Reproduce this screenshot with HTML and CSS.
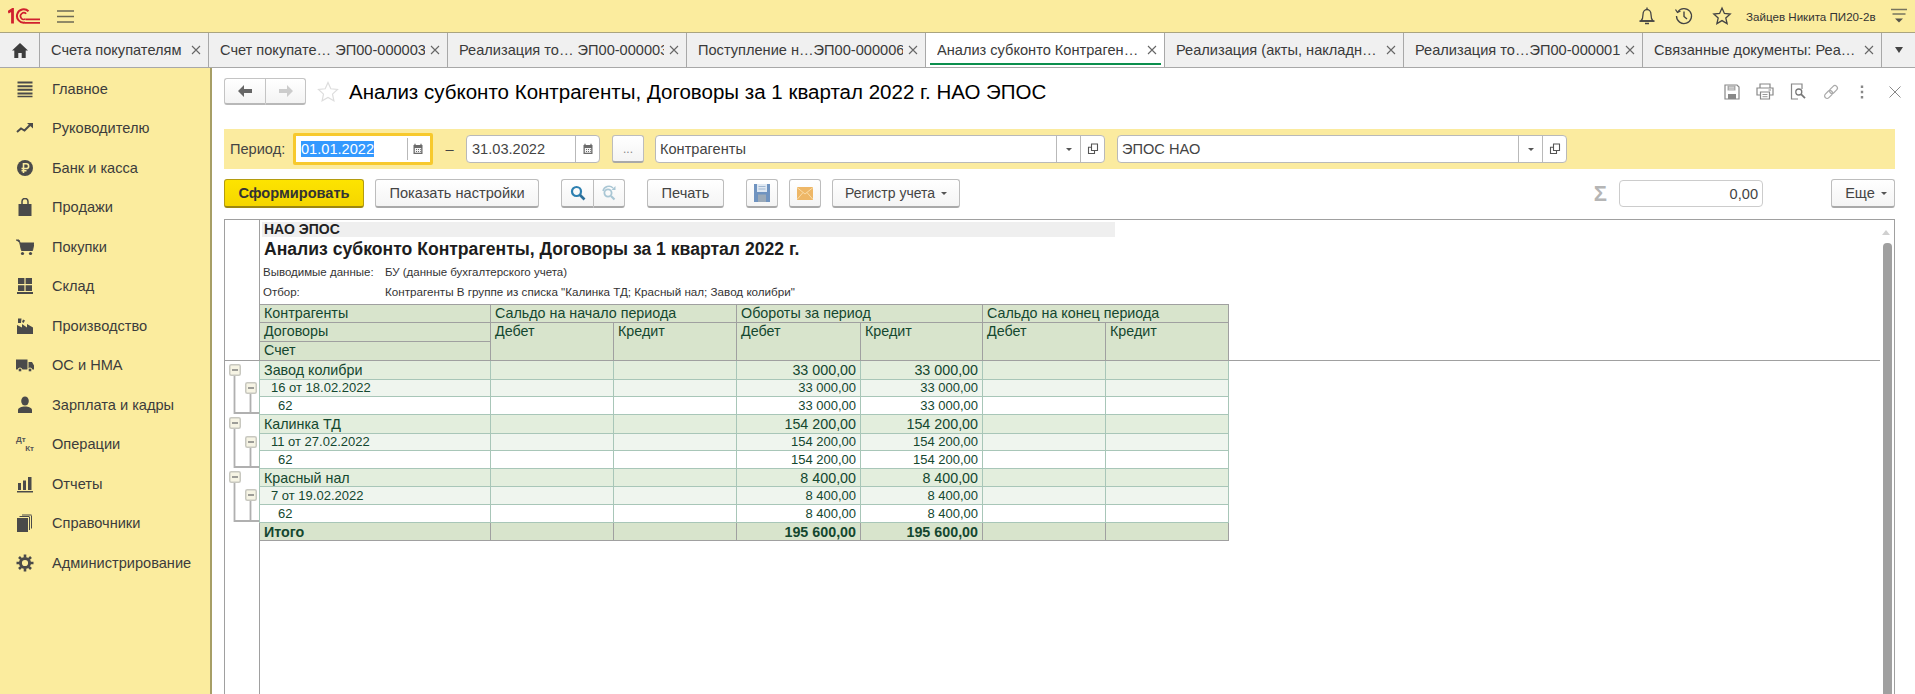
FILE: index.html
```html
<!DOCTYPE html>
<html lang="ru">
<head>
<meta charset="utf-8">
<title>Анализ субконто</title>
<link rel="stylesheet" href="styles.css">
</head>
<body>
<svg class="defs" width="0" height="0">
  <defs>
    <symbol id="i-x" viewBox="0 0 10 10"><path d="M1 1l8 8M9 1l-8 8" fill="none" stroke="currentColor" stroke-width="1.1"/></symbol>
    <symbol id="i-cal" viewBox="0 0 12 12"><path d="M1.5 2h9v9h-9z" fill="#6b6b6b"/><path d="M3 .8v2M9 .8v2" stroke="#6b6b6b" stroke-width="1.2"/><path d="M2.8 5h6.4v4.8H2.8z" fill="#f3f3f3"/><path d="M4 6h1v1H4zM6 6h1v1H6zM8 6h.8v1H8zM4 8h1v1H4zM6 8h1v1H6zM8 8h.8v1H8z" fill="#6b6b6b"/></symbol>
    <symbol id="i-open" viewBox="0 0 12 12"><path d="M4.5 1h6v6.5h-6z" fill="none" stroke="#555" stroke-width="1.1"/><path d="M4.5 4.2H1.5v6.3h6V8" fill="none" stroke="#555" stroke-width="1.1"/></symbol>
    <symbol id="i-minus" viewBox="0 0 12 12"><rect x=".75" y=".75" width="10.5" height="10.5" rx="1.5" fill="#f6f4e4" stroke="#c8c8c0" stroke-width="1.5"/><path d="M3 6h6" stroke="#777" stroke-width="1.4"/></symbol>
  </defs>
</svg>

<header class="topbar">
  <svg class="logo" viewBox="0 0 32 16" width="32" height="16"><path d="M0 4.300L4.500 1.500V15.500" fill="none" stroke="#d0202e" stroke-width="2.800"/><path d="M20.500 3.300A6.700 6.700 0 1 0 17 14.500" fill="none" stroke="#d0202e" stroke-width="2"/><path d="M18.200 5.800A3.300 3.300 0 1 0 17.500 10.900" fill="none" stroke="#d0202e" stroke-width="1.600"/><path d="M17 14.900H32M17.500 11.300H32" stroke="#d0202e" stroke-width="1.700"/></svg>
  <svg class="burger" viewBox="0 0 17 13" width="17" height="13"><path d="M0 1h17M0 6.500h17M0 12h17" stroke="#6e6a55" stroke-width="1.400"/></svg>
  <div class="top-right">
    <svg class="tico" viewBox="0 0 18 20" width="18" height="20"><path d="M3 15c1.500-1.500 2-3 2-6.500C5 5.500 6.800 3.500 9 3.500s4 2 4 5c0 3.500.5 5 2 6.500z" fill="none" stroke="#444" stroke-width="1.300"/><path d="M9 1.500v2M1.500 15h15M7 17.500h4" stroke="#444" stroke-width="1.300"/></svg>
    <svg class="tico" viewBox="0 0 20 20" width="20" height="20"><path d="M3.700 6A7.500 7.500 0 1 1 2.500 10" fill="none" stroke="#444" stroke-width="1.300"/><path d="M1.500 3.500l2 3 3-1.500" fill="none" stroke="#444" stroke-width="1.300"/><path d="M10 5.500V10.500l3 2.500" fill="none" stroke="#444" stroke-width="1.400"/></svg>
    <svg class="tico" viewBox="0 0 20 20" width="20" height="20"><path d="M10 2l2.400 5.400 5.800.6-4.400 3.900 1.300 5.700-5.100-3-5.100 3 1.300-5.700L1.800 8l5.800-.6z" fill="none" stroke="#444" stroke-width="1.300"/></svg>
    <span class="user">Зайцев Никита ПИ20-2в</span>
    <svg class="tico" viewBox="0 0 16 16" width="16" height="16"><path d="M0 1.500h16M1.500 6h13" stroke="#77745f" stroke-width="1.400"/><path d="M4 10.500h8l-4 4z" fill="#55534a"/></svg>
  </div>
</header>

<nav class="tabs">
  <div class="tab home"><svg viewBox="0 0 16 15" width="16" height="15"><path d="M8 0L0 7.500h2.300V15h4v-5h3.400v5h4V7.500H16z" fill="#3d3d3d"/></svg></div>
  <div class="tab"><span class="tab-text">Счета покупателям</span><svg class="tab-x"><use href="#i-x"/></svg></div>
  <div class="tab"><span class="tab-text">Счет покупате… ЭП00-000003</span><svg class="tab-x"><use href="#i-x"/></svg></div>
  <div class="tab"><span class="tab-text">Реализация то… ЭП00-000003</span><svg class="tab-x"><use href="#i-x"/></svg></div>
  <div class="tab"><span class="tab-text">Поступление н…ЭП00-000006</span><svg class="tab-x"><use href="#i-x"/></svg></div>
  <div class="tab active"><span class="tab-text">Анализ субконто Контраген…</span><svg class="tab-x"><use href="#i-x"/></svg></div>
  <div class="tab"><span class="tab-text">Реализация (акты, накладн…</span><svg class="tab-x"><use href="#i-x"/></svg></div>
  <div class="tab"><span class="tab-text">Реализация то…ЭП00-000001</span><svg class="tab-x"><use href="#i-x"/></svg></div>
  <div class="tab"><span class="tab-text">Связанные документы: Реа…</span><svg class="tab-x"><use href="#i-x"/></svg></div>
  <div class="tab more"><span class="caret big"></span></div>
</nav>

<div class="layout">
  <aside class="sidebar">
    <div class="side-item"><svg viewBox="0 0 18 18" width="18" height="18"><path d="M1.500 2.500h15M1.500 6.200h15M1.500 9.800h15M1.500 13.500h15" stroke="#4a4a4a" stroke-width="2"/><path d="M1.500 16.500h15" stroke="#4a4a4a" stroke-width="1.500"/></svg><span>Главное</span></div>
    <div class="side-item"><svg viewBox="0 0 18 18" width="18" height="18"><path d="M1 13l4-3.500 3.500 2L14 6" fill="none" stroke="#4a4a4a" stroke-width="2"/><path d="M11 4h6v5.500z" fill="#4a4a4a"/></svg><span>Руководителю</span></div>
    <div class="side-item"><svg viewBox="0 0 18 18" width="18" height="18"><circle cx="9" cy="9" r="8" fill="#4a4a4a"/><path d="M7.500 14V4.800h2.800a2.300 2.300 0 0 1 0 4.700H5.500M5.500 11.800h5" fill="none" stroke="#fbec9e" stroke-width="1.600"/></svg><span>Банк и касса</span></div>
    <div class="side-item"><svg viewBox="0 0 18 18" width="18" height="18"><path d="M2.500 6h13v12h-13z" fill="#4a4a4a"/><path d="M6 8V3.500a3 3 0 0 1 6 0V8" fill="none" stroke="#4a4a4a" stroke-width="1.500"/></svg><span>Продажи</span></div>
    <div class="side-item"><svg viewBox="0 0 18 18" width="18" height="18"><path d="M0 2h3l1.200 3H18l-1.500 7.500H5.500L3.800 5" fill="#4a4a4a" stroke="#4a4a4a"/><circle cx="6.500" cy="15.500" r="1.600" fill="#4a4a4a"/><circle cx="14.500" cy="15.500" r="1.600" fill="#4a4a4a"/></svg><span>Покупки</span></div>
    <div class="side-item"><svg viewBox="0 0 18 18" width="18" height="18"><path d="M2 1h6.400v6H2zM9.600 1H16v6H9.600zM2 8.200h6.400v5.800H2zM9.600 8.200H16v5.800H9.600zM1 15h16v2H1z" fill="#4a4a4a"/></svg><span>Склад</span></div>
    <div class="side-item"><svg viewBox="0 0 18 18" width="18" height="18"><path d="M1 17V8l5 2.500V7l5 3.500V7l6 3.500V17z" fill="#4a4a4a"/><path d="M2 1.500h3.500L5 6H2zM7 2.500l2 1-1.500 2.500-1.500-1z" fill="#4a4a4a"/></svg><span>Производство</span></div>
    <div class="side-item"><svg viewBox="0 0 18 18" width="18" height="18"><path d="M0 3.500h11.500v10H0zM12.500 6H16l2 3.500v4h-5.500z" fill="#4a4a4a"/><circle cx="4" cy="14" r="2" fill="#4a4a4a" stroke="#fbec9e"/><circle cx="14" cy="14" r="2" fill="#4a4a4a" stroke="#fbec9e"/></svg><span>ОС и НМА</span></div>
    <div class="side-item"><svg viewBox="0 0 18 18" width="18" height="18"><ellipse cx="9" cy="5" rx="3.800" ry="4.500" fill="#4a4a4a"/><path d="M2 17v-3c0-2 3.500-3.500 7-3.500s7 1.500 7 3.500v3z" fill="#4a4a4a"/></svg><span>Зарплата и кадры</span></div>
    <div class="side-item"><span class="dtkt"><b>Дт</b><b class="kt">Кт</b></span><span>Операции</span></div>
    <div class="side-item"><svg viewBox="0 0 18 18" width="18" height="18"><path d="M2 8h3v7H2zM7 5.500h3V15H7zM12 2h3.500v13H12z" fill="#4a4a4a"/><path d="M1 16h16v1.500H1z" fill="#4a4a4a"/></svg><span>Отчеты</span></div>
    <div class="side-item"><svg viewBox="0 0 18 18" width="18" height="18"><path d="M1 4h11v14H1z" fill="#4a4a4a"/><path d="M13.500 3v13M15.500 1.500v13M3.500 2.500h10M6 1h9.500" fill="none" stroke="#4a4a4a" stroke-width="1"/></svg><span>Справочники</span></div>
    <div class="side-item"><svg viewBox="0 0 18 18" width="18" height="18"><circle cx="9" cy="9" r="4.600" fill="none" stroke="#4a4a4a" stroke-width="3"/><path d="M9 .5v3M9 14.500v3M.5 9h3M14.500 9h3M3 3l2.200 2.200M12.800 12.800L15 15M15 3l-2.200 2.200M5.200 12.800L3 15" stroke="#4a4a4a" stroke-width="2.600"/></svg><span>Администрирование</span></div>
  </aside>

  <main class="main">
    <div class="title-row">
      <div class="nav-pair">
        <button class="nav-btn"><svg viewBox="0 0 14 12" width="14" height="12"><path d="M6 0v4h8v4H6v4L0 6z" fill="#666"/></svg></button>
        <button class="nav-btn"><svg viewBox="0 0 14 12" width="14" height="12"><path d="M8 0v4H0v4h8v4l6-6z" fill="#ccc"/></svg></button>
      </div>
      <svg class="fav" viewBox="0 0 22 22" width="22" height="22"><path d="M11 1.500l2.800 6.300 6.700.7-5 4.600 1.400 6.700-5.900-3.400-5.900 3.400 1.400-6.700-5-4.600 6.700-.7z" fill="none" stroke="#ddd" stroke-width="1.200"/></svg>
      <h1 class="title">Анализ субконто Контрагенты, Договоры за 1 квартал 2022 г. НАО ЭПОС</h1>
      <div class="form-icons">
        <svg class="fi" viewBox="0 0 16 16" width="16" height="16"><path d="M1 1h12l2 2v12H1z" fill="none" stroke="#888" stroke-width="1.200"/><path d="M3.500 1.500h8v5h-8z" fill="#aaa"/><path d="M4 10h8v5H4z" fill="#888"/><path d="M5 3.200h5M5 5h5" stroke="#eee" stroke-width=".8"/></svg>
        <svg class="fi" viewBox="0 0 18 17" width="18" height="17"><path d="M4 5V1h10v4M4 12H1V5h16v7h-3" fill="none" stroke="#888" stroke-width="1.200"/><path d="M4.500 9h9v7h-9z" fill="#fff" stroke="#888" stroke-width="1.200"/><path d="M6.500 11.500h5M6.500 13.700h5" stroke="#999"/><path d="M12.500 7h2.500" stroke="#999" stroke-width="1.200"/></svg>
        <svg class="fi" viewBox="0 0 17 17" width="17" height="17"><path d="M8 16H1.500V1H12v5" fill="none" stroke="#888" stroke-width="1.200"/><circle cx="8.800" cy="9" r="3" fill="none" stroke="#777" stroke-width="1.300"/><path d="M11 11.200l4 4" stroke="#777" stroke-width="1.800"/></svg>
        <svg class="fi" viewBox="0 0 18 18" width="18" height="18"><g transform="rotate(-45 9 9)" fill="none" stroke="#aaa" stroke-width="1.200"><rect x="1" y="6.500" width="9" height="5" rx="2.500"/><rect x="8" y="6.500" width="9" height="5" rx="2.500"/></g></svg>
        <svg class="fi" viewBox="0 0 4 14" width="4" height="14"><path d="M.8.500h2.400v2.400H.8zM.8 5.800h2.400v2.400H.8zM.8 11h2.400v2.400H.8z" fill="#888"/></svg>
        <svg class="fi" viewBox="0 0 12 12" width="12" height="12"><path d="M.5.500l11 11M11.500.500l-11 11" stroke="#888" stroke-width="1"/></svg>
      </div>
    </div>

    <div class="period">
      <label class="period-label">Период:</label>
      <div class="focus-ring">
        <div class="field date focused"><span class="val"><span class="sel">01.01.2022</span></span><span class="cell-btn"><svg width="12" height="12"><use href="#i-cal"/></svg></span></div>
      </div>
      <span class="dash">–</span>
      <div class="field date"><span class="val">31.03.2022</span><span class="cell-btn"><svg width="12" height="12"><use href="#i-cal"/></svg></span></div>
      <button class="btn dots">...</button>
      <div class="field pick"><span class="val">Контрагенты</span><span class="cell-btn"><span class="caret small"></span></span><span class="cell-btn"><svg width="12" height="12"><use href="#i-open"/></svg></span></div>
      <div class="field pick"><span class="val">ЭПОС НАО</span><span class="cell-btn"><span class="caret small"></span></span><span class="cell-btn"><svg width="12" height="12"><use href="#i-open"/></svg></span></div>
    </div>

    <div class="toolbar">
      <button class="btn primary">Сформировать</button>
      <button class="btn wide-settings">Показать настройки</button>
      <div class="icon-pair sep">
        <button class="btn ico"><svg viewBox="0 0 16 16" width="16" height="16"><circle cx="6.500" cy="6.500" r="4.500" fill="none" stroke="#2c7fb0" stroke-width="2.200"/><path d="M10 10l4.500 4.500" stroke="#2c6f9a" stroke-width="2.600"/></svg></button>
        <button class="btn ico"><svg viewBox="0 0 16 16" width="16" height="16"><circle cx="7" cy="8" r="3.600" fill="none" stroke="#a9c6d4" stroke-width="1.800"/><path d="M10 11l3.500 3.500" stroke="#a9c6d4" stroke-width="2.200"/><path d="M2 6a6 6 0 0 1 10-3" fill="none" stroke="#a9c6d4" stroke-width="1.500"/><path d="M14.500 1v4h-4z" fill="#a9c6d4"/></svg></button>
      </div>
      <button class="btn print sep">Печать</button>
      <button class="btn ico square sep"><svg viewBox="0 0 18 20" width="18" height="20"><path d="M1 1h16v18H1z" fill="#6f93c0"/><path d="M4 1h10v8H4z" fill="#dfe8f2"/><path d="M5 11.500h8V19H5z" fill="#9aa9b8"/><path d="M5.500 3.500h7M5.500 6h7" stroke="#9fb6d0"/></svg></button>
      <button class="btn ico square"><svg viewBox="0 0 16 13" width="16" height="13"><path d="M0 0h16v13H0z" fill="#eeb767"/><path d="M0 .5l8 6.500 8-6.500M0 12.500l6-7M16 12.500l-6-7" fill="none" stroke="#f9dca8" stroke-width="1"/></svg></button>
      <button class="btn register">Регистр учета<span class="caret small inline"></span></button>
      <div class="sum-group">
        <span class="sigma">Σ</span>
        <div class="sum-field">0,00</div>
      </div>
      <button class="btn more-btn">Еще<span class="caret small inline"></span></button>
    </div>

    <section class="sheet">
      <div class="freeze-line"></div>
      <div class="gutter">
        <svg class="tree" viewBox="0 0 34 165" width="34" height="165">
          <g fill="none" stroke="#b0b0b0" stroke-width="1.800">
            <path d="M9.500 15v38h25M25.500 32v21h9"/>
            <path d="M9.500 68v39h25M25.500 86v21h9"/>
            <path d="M9.500 122v39h25M25.500 140v21h9"/>
          </g>
          <use href="#i-minus" x="4" y="4" width="12" height="12"/>
          <use href="#i-minus" x="20" y="22" width="12" height="12"/>
          <use href="#i-minus" x="4" y="57" width="12" height="12"/>
          <use href="#i-minus" x="20" y="76" width="12" height="12"/>
          <use href="#i-minus" x="4" y="111" width="12" height="12"/>
          <use href="#i-minus" x="20" y="129" width="12" height="12"/>
        </svg>
      </div>
      <div class="report">
        <div class="company">НАО ЭПОС</div>
        <div class="report-title">Анализ субконто Контрагенты, Договоры за 1 квартал 2022 г.</div>
        <div class="meta"><span class="meta-k">Выводимые данные:</span><span>БУ (данные бухгалтерского учета)</span></div>
        <div class="meta"><span class="meta-k">Отбор:</span><span class="meta-wide">Контрагенты В группе из списка "Калинка ТД; Красный нал; Завод колибри"</span></div>
        <table class="grid">
          <colgroup><col class="c0"><col class="c1"><col class="c1"><col class="c2"><col class="c3"><col class="c1"><col class="c1"></colgroup>
          <thead>
            <tr class="h18"><th>Контрагенты</th><th colspan="2">Сальдо на начало периода</th><th colspan="2">Обороты за период</th><th colspan="2">Сальдо на конец периода</th></tr>
            <tr class="h19"><th>Договоры</th><th rowspan="2">Дебет</th><th rowspan="2">Кредит</th><th rowspan="2">Дебет</th><th rowspan="2">Кредит</th><th rowspan="2">Дебет</th><th rowspan="2">Кредит</th></tr>
            <tr class="h19"><th>Счет</th></tr>
          </thead>
          <tbody>
            <tr class="l1 h19"><td>Завод колибри</td><td></td><td></td><td>33 000,00</td><td>33 000,00</td><td></td><td></td></tr>
            <tr class="l2 h17"><td>16 от 18.02.2022</td><td></td><td></td><td>33 000,00</td><td>33 000,00</td><td></td><td></td></tr>
            <tr class="l3 h18"><td>62</td><td></td><td></td><td>33 000,00</td><td>33 000,00</td><td></td><td></td></tr>
            <tr class="l1 h19"><td>Калинка ТД</td><td></td><td></td><td>154 200,00</td><td>154 200,00</td><td></td><td></td></tr>
            <tr class="l2 h17"><td>11 от 27.02.2022</td><td></td><td></td><td>154 200,00</td><td>154 200,00</td><td></td><td></td></tr>
            <tr class="l3 h18"><td>62</td><td></td><td></td><td>154 200,00</td><td>154 200,00</td><td></td><td></td></tr>
            <tr class="l1 h18"><td>Красный нал</td><td></td><td></td><td>8 400,00</td><td>8 400,00</td><td></td><td></td></tr>
            <tr class="l2 h18"><td>7 от 19.02.2022</td><td></td><td></td><td>8 400,00</td><td>8 400,00</td><td></td><td></td></tr>
            <tr class="l3 h18"><td>62</td><td></td><td></td><td>8 400,00</td><td>8 400,00</td><td></td><td></td></tr>
            <tr class="total h18"><td>Итого</td><td></td><td></td><td>195 600,00</td><td>195 600,00</td><td></td><td></td></tr>
          </tbody>
        </table>
      </div>
      <div class="scroll-up"></div>
      <div class="scroll-thumb"></div>
    </section>
  </main>
</div>
</body>
</html>
```
FILE: styles.css
```css
* { box-sizing: border-box; }
html, body { margin: 0; height: 694px; overflow: hidden; }
body { font-family: "Liberation Sans", Arial, sans-serif; font-size: 14.6px; color: #333; background: #fff; display: flex; flex-direction: column; }
.defs { position: absolute; }
button { font: inherit; color: inherit; padding: 0; }

.topbar { height: 33px; flex: none; background: #fbec9e; border-bottom: 1px solid #aaa47f; display: flex; align-items: center; padding-left: 8px; }
.logo { display: block; }
.burger { margin-left: 17px; }
.top-right { margin-left: auto; display: flex; align-items: center; }
.tico { display: block; margin-right: 18px; }
.top-right .tico:nth-child(3) { margin-right: 14px; }
.top-right .tico:last-child { margin: 0 8px 0 14px; }
.user { font-size: 11.600px; color: #333; width: 131px; white-space: nowrap; }

.tabs { height: 35px; flex: none; display: grid; grid-template-columns: 40px 169px repeat(7, 239px) 1fr; background: #f0f0f0; border-bottom: 1px solid #a8a8a8; }
.tab { position: relative; display: flex; align-items: center; padding: 0 7px 0 11px; border-right: 1px solid #a8a8a8; min-width: 0; }
.tab-text { white-space: pre; overflow: hidden; flex: 1; min-width: 0; line-height: 20px; color: #3a3a3a; }
.tab-x { width: 10px; height: 10px; flex: none; margin-left: 5px; color: #666; }
.tab.home { justify-content: center; padding: 0; }
.tab.more { justify-content: center; padding: 0; border-right: 0; }
.tab.active { background: #fff; }
.tab.active::after { content: ""; position: absolute; left: 4px; right: 3px; bottom: 2px; height: 2px; background: #0b8f4d; }

.caret { display: inline-block; width: 0; height: 0; border-style: solid; border-color: #555 transparent transparent; }
.caret.big { border-width: 6px 4.500px 0; border-top-color: #444; }
.caret.small { border-width: 3px 3px 0; }
.caret.inline { margin-left: 6px; vertical-align: 1px; }

.layout { flex: 1; min-height: 0; display: flex; }
.sidebar { width: 212px; flex: none; background: #fbec9e; border-right: 2px solid #a79f66; padding-top: 1px; }
.side-item { height: 39.500px; display: flex; align-items: center; padding-left: 16px; }
.side-item svg { display: block; flex: none; }
.side-item > span:last-child { margin-left: 18px; color: #3c3c3c; }
.dtkt { width: 18px; height: 18px; flex: none; position: relative; font-size: 8px; line-height: 9px; color: #555; display: block; }
.dtkt b { display: block; }
.dtkt .kt { text-align: right; }

.main { flex: 1; min-width: 0; display: flex; flex-direction: column; padding: 10px 20px 0 12px; }
.title-row { height: 27px; flex: none; display: flex; align-items: center; }
.nav-pair { display: flex; }
.nav-btn { width: 41px; height: 27px; background: linear-gradient(#fff, #f3f3f3); border: 1px solid #c4c4c4; border-bottom: 2px solid #b8b8b8; display: flex; align-items: center; justify-content: center; }
.nav-btn:first-child { border-radius: 3px 0 0 3px; border-right: 0; }
.nav-btn:first-child + .nav-btn { border-radius: 0 3px 3px 0; }
.fav { margin-left: 11px; flex: none; }
.title { margin: 0 0 0 10px; font-size: 20.530px; font-weight: 400; color: #000; white-space: nowrap; line-height: 27px; }
.form-icons { margin-left: auto; display: flex; align-items: center; }
.fi { display: block; }
.fi:nth-child(1) { margin-right: 16px; }
.fi:nth-child(2) { margin-right: 16px; }
.fi:nth-child(3) { margin-right: 15px; }
.fi:nth-child(4) { margin-right: 20px; }
.fi:nth-child(5) { margin-right: 25px; }
.fi:nth-child(6) { margin-right: -6px; }

.period { height: 40px; margin-top: 24px; flex: none; background: #fbeb9f; display: flex; align-items: center; padding-left: 6px; }
.period-label { width: 63px; flex: none; color: #444; }
.focus-ring { padding: 2px; border: 3px solid #f7c92d; border-radius: 2px; background: #fff; width: 140px; height: 32px; display: flex; }
.field { height: 28px; border: 1px solid #b9b9b9; border-radius: 4px; background: #fff; display: flex; overflow: hidden; color: #444; }
.field.date { width: 134px; }
.field.date.focused { border: 0; width: 100%; height: 100%; }
.val { flex: 1; min-width: 0; line-height: 26px; padding-left: 5px; white-space: nowrap; }
.focused .val { line-height: 22px; padding-left: 3px; }
.sel { background: #3399ff; color: #fff; display: inline-block; line-height: 16px; }
.cell-btn { width: 24px; flex: none; border-left: 1px solid #b9b9b9; display: flex; align-items: center; justify-content: center; }
.focused .cell-btn { width: 21px; }
.dash { width: 33px; text-align: center; flex: none; color: #444; }
.btn.dots { width: 32px; height: 28px; margin-left: 12px; color: #888; font-size: 12px; }
.field.pick { width: 450px; margin-left: 12px; }
.btn.dots + .field.pick { margin-left: 11px; }
.field.pick .val { padding-left: 4px; }
.field.pick .cell-btn { width: 24px; }

.btn { height: 29px; background: linear-gradient(#fff, #f4f4f4); border: 1px solid #bdbdbd; border-bottom: 2px solid #a9a9a9; border-radius: 3px; color: #444; flex: none; display: inline-flex; align-items: center; justify-content: center; white-space: nowrap; }
.toolbar { height: 29px; margin-top: 10px; flex: none; display: flex; gap: 11px; }
.primary { width: 140px; background: linear-gradient(#fde400, #f5d600); border-color: #b49c10; border-bottom-color: #9c8710; font-weight: 700; color: #333; }
.wide-settings { width: 164px; }
.sep { margin-left: 11px; }
.icon-pair { display: flex; }
.btn.ico { width: 32px; }
.icon-pair .btn:first-child { border-radius: 3px 0 0 3px; border-right: 0; }
.icon-pair .btn:last-child { border-radius: 0 3px 3px 0; }
.print { width: 77px; }
.btn.square { width: 32px; }
.register { width: 128px; font-size: 14px; }
.sum-group { margin-left: auto; display: flex; align-items: center; }
.sigma { font-size: 22px; color: #b5b5b5; font-weight: 700; margin-right: 12px; line-height: 1; }
.sum-field { width: 144px; height: 27px; border: 1px solid #ccc; border-radius: 4px; background: #fff; text-align: right; padding-right: 4px; line-height: 26px; color: #444; }
.more-btn { width: 64px; margin-left: 57px; padding-left: 6px; }

.sheet { flex: 1; min-height: 0; margin-top: 11px; border: 1px solid #a0a0a0; border-bottom: 0; display: flex; position: relative; overflow: hidden; }
.freeze-line { position: absolute; left: 0; right: 14px; top: 140px; height: 1px; background: #a0a0a0; }
.gutter { width: 35px; flex: none; border-right: 1px solid #a0a0a0; }
.tree { display: block; margin-top: 140px; position: relative; }
.report { flex: 1; min-width: 0; position: relative; }
.company { margin: 2px 0 0 2px; width: 853px; height: 15px; background: #efefef; font-size: 14px; font-weight: 700; line-height: 15px; padding-left: 2px; color: #222; }
.report-title { height: 25px; line-height: 25px; padding-left: 4px; font-size: 17.600px; font-weight: 700; color: #1d1d1d; white-space: nowrap; }
.meta { height: 20px; line-height: 20px; font-size: 11.500px; color: #333; display: flex; padding-left: 3px; white-space: nowrap; }
.meta-k { width: 122px; flex: none; }
.meta-wide { font-size: 11.650px; }
.grid { margin: 2px 0 0 -1px; border-collapse: collapse; table-layout: fixed; width: 970px; position: relative; color: #14472f; }
.c0 { width: 231px; }
.c1 { width: 123px; }
.c2 { width: 124px; }
.c3 { width: 122px; }
.grid th, .grid td { padding: 0 4px; font-weight: 400; font-size: 14.300px; line-height: 16px; vertical-align: middle; white-space: nowrap; overflow: hidden; }
.grid th { background: #d8e4cc; border: 1px solid #a0a0a0; text-align: left; vertical-align: top; }
.grid td { border: 1px solid #a8c6b8; }
.grid td + td { text-align: right; }
.h17 { height: 17px; }
.h18 { height: 18px; }
.h19 { height: 19px; }
.l1 td { background: #e3eedd; }
.l2 td { background: #eff5ee; font-size: 13px; }
.l3 td { background: #fff; font-size: 13px; }
.l2 td:first-child { padding-left: 11px; }
.l3 td:first-child { padding-left: 18px; }
.total td { background: #d8e4cc; font-weight: 700; border-color: #a0a0a0; }
.scroll-up { position: absolute; top: 10px; right: 4px; border-style: solid; border-width: 0 4px 5px; border-color: transparent transparent #d0d0d0; }
.scroll-thumb { position: absolute; top: 23px; right: 2px; bottom: 0; width: 9px; border-radius: 4px 4px 0 0; background: #a0a0a0; }
```
